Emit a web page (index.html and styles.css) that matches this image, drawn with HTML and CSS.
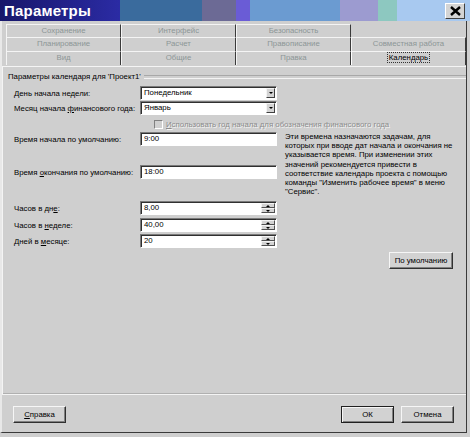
FILE: index.html
```html
<!DOCTYPE html>
<html lang="ru">
<head>
<meta charset="utf-8">
<title>Параметры</title>
<link rel="stylesheet" href="styles.css">
</head>
<body>
<div class="window">
  <div class="titlebar">
    <div class="band b1"><span class="title">Параметры</span></div>
    <div class="band b2"></div>
    <div class="band b3"></div>
    <div class="band b4"></div>
    <div class="band b5"></div>
    <div class="band b6"></div>
    <div class="band b7"></div>
    <div class="band b8">
      <div class="close">
        <svg width="11" height="10" viewBox="0 0 11 10"><path d="M1 1 L10 9 M10 1 L1 9" stroke="#000" stroke-width="2.4" fill="none"/></svg>
      </div>
    </div>
  </div>

  <div class="tabs">
    <div class="tabrow r1">
      <div class="tab">Сохранение</div>
      <div class="tab">Интерфейс</div>
      <div class="tab">Безопасность</div>
    </div>
    <div class="tabrow r2">
      <div class="tab">Планирование</div>
      <div class="tab">Расчет</div>
      <div class="tab">Правописание</div>
      <div class="tab">Совместная работа</div>
    </div>
    <div class="tabrow r3">
      <div class="tab">Вид</div>
      <div class="tab">Общие</div>
      <div class="tab">Правка</div>
      <div class="tab active"><span class="focus">Календарь</span></div>
    </div>
  </div>

  <div class="panel">
    <div class="legend"><span>Параметры календаря для 'Проект1'</span></div>

    <div class="row row-sel1">
      <label class="lbl">День начала недели:</label>
      <div class="field select"><span class="val">Понедельник</span><span class="ddbtn"><i></i></span></div>
    </div>
    <div class="row row-sel2">
      <label class="lbl">Месяц начала <u>ф</u>инансового года:</label>
      <div class="field select"><span class="val">Январь</span><span class="ddbtn"><i></i></span></div>
    </div>
    <div class="checkrow">
      <span class="check"></span>
      <span class="disabled"><u>И</u>спользовать год начала для обозначения финансового года</span>
    </div>

    <div class="timegroup">
      <div class="timecol">
        <div class="row">
          <label class="lbl">Время начала по умолчанию:</label>
          <div class="field"><span class="val">9:00</span></div>
        </div>
        <div class="row row-end">
          <label class="lbl">Время <u>о</u>кончания по умолчанию:</label>
          <div class="field"><span class="val">18:00</span></div>
        </div>
      </div>
      <p class="desc">Эти времена назначаются задачам, для которых при вводе дат начала и окончания не указывается время. При изменении этих значений рекомендуется привести в соответствие календарь проекта с помощью команды "Изменить рабочее время" в меню "Сервис".</p>
    </div>

    <div class="row row-spin1">
      <label class="lbl">Часов в дн<u>е</u>:</label>
      <div class="field spin"><span class="val">8,00</span><span class="spinbtns"><span class="sb up"><i></i></span><span class="sb down"><i></i></span></span></div>
    </div>
    <div class="row row-spin2">
      <label class="lbl">Часов в <u>н</u>еделе:</label>
      <div class="field spin"><span class="val">40,00</span><span class="spinbtns"><span class="sb up"><i></i></span><span class="sb down"><i></i></span></span></div>
    </div>
    <div class="row row-spin3">
      <label class="lbl">Дней в <u>м</u>есяце:</label>
      <div class="field spin"><span class="val">20</span><span class="spinbtns"><span class="sb up"><i></i></span><span class="sb down"><i></i></span></span></div>
    </div>

    <div class="defrow">
      <button class="btn btn-def">По умолчанию</button>
    </div>
  </div>

  <div class="footer">
    <button class="btn"><u>С</u>правка</button>
    <div class="spacer"></div>
    <button class="btn btn-ok">ОК</button>
    <button class="btn">Отмена</button>
  </div>
</div>
</body>
</html>
```

FILE: styles.css
```css
* { box-sizing: border-box; }
html, body { margin: 0; padding: 0; }
body {
  background: #cfcfcf;
  font-family: "Liberation Sans", Arial, sans-serif;
  font-size: 7.8px;
  color: #000;
  width: 470px;
  height: 437px;
  overflow: hidden;
}
.window {
  width: 467px;
  height: 433px;
  border-left: 2px solid #e8e8e8;
  border-right: 1px solid #3a3a3a;
  border-bottom: 1px solid #3a3a3a;
  display: flex;
  flex-direction: column;
  position: relative;
}
/* title bar */
.titlebar {
  height: 21px;
  display: flex;
  margin-left: -2px;
  width: 470px;
}
.band { height: 21px; }
.b1 { width: 120px; background: linear-gradient(90deg, #17176a, #2b2ba4); display: flex; align-items: center; }
.b2 { width: 82px; background: #3a6b9d; }
.b3 { width: 34px; background: #6c6a95; }
.b4 { width: 14px; background: #6a5cd6; }
.b5 { width: 90px; background: #6b9bd1; }
.b6 { width: 38px; background: #9c9bd0; }
.b7 { width: 19px; background: #8dc8c0; }
.b8 { flex: 1; background: #a8c9f0; position: relative; }
.title {
  color: #fff;
  font-weight: bold;
  font-size: 15px;
  margin-left: 4px;
  letter-spacing: 0.2px;
}
.close {
  position: absolute;
  left: 48px;
  top: 3px;
  width: 20px;
  height: 16px;
  background: #d4d4d4;
  border: 1px solid;
  border-color: #fff #404040 #404040 #fff;
  display: flex;
  align-items: center;
  justify-content: center;
}
/* tabs */
.tabs {
  margin-top: 3px;
  margin-left: 4px;
}
.tabrow { display: flex; }
.r1 { height: 13px; }
.r2, .r3 { height: 14px; }
.tab {
  width: 115px;
  border-top: 1px solid #f4f4f4;
  border-left: 1px solid #f4f4f4;
  border-right: 1px solid #3a3a3a;
  color: #8c9696;
  text-align: center;
  line-height: 12px;
  white-space: nowrap;
}
.tab.active {
  color: #000;
  border-left-color: #fff;
}
.focus {
  outline: 1px dotted #333;
  outline-offset: 0px;
  padding: 0 1px;
}
/* panel */
.panel {
  margin-top: 1px;
  height: 329px;
  margin-right: 0;
  border-top: 1px solid #f4f4f4;
  border-left: 1px solid #f4f4f4;
  border-bottom: 1px solid #f4f4f4;
  box-shadow: 0 -1px 0 0 #b0b0b0 inset;
  display: flex;
  flex-direction: column;
}
.legend {
  margin-top: 5px;
  margin-left: 5px;
  height: 10px;
  line-height: 10px;
  display: flex;
  align-items: center;
  white-space: nowrap;
}
.legend::after {
  content: "";
  flex: 1;
  height: 2px;
  margin-left: 3px;
  border-top: 1px solid #a8a8a8;
  border-bottom: 1px solid #f4f4f4;
}
.row {
  display: flex;
  align-items: center;
  height: 14px;
  padding-left: 11px;
}
.lbl { width: 126px; white-space: nowrap; }
.row-sel1 { margin-top: 4px; }
.row-sel2 { margin-top: 1px; }
.field {
  width: 137px;
  height: 14px;
  background: #fff;
  border: 1px solid;
  border-color: #7a7a7a #fff #fff #7a7a7a;
  box-shadow: inset 1px 1px 0 #303030;
  display: flex;
  align-items: center;
  position: relative;
}
.val { padding-left: 3px; line-height: 12px; }
.ddbtn {
  position: absolute;
  right: 1px;
  top: 1px;
  width: 9px;
  height: 10px;
  background: #d4d4d4;
  border: 1px solid;
  border-color: #f4f4f4 #404040 #404040 #f4f4f4;
  display: flex;
  align-items: center;
  justify-content: center;
}
.ddbtn i, .sb.down i {
  width: 0; height: 0;
  border-left: 2px solid transparent;
  border-right: 2px solid transparent;
  border-top: 2px solid #000;
}
.sb.up i {
  width: 0; height: 0;
  border-left: 2px solid transparent;
  border-right: 2px solid transparent;
  border-bottom: 2px solid #000;
}
.checkrow {
  margin-top: 4px;
  height: 10px;
  display: flex;
  align-items: center;
  padding-left: 151px;
  white-space: nowrap;
}
.check {
  width: 9px;
  height: 9px;
  background: #d0d0d0;
  border: 1px solid;
  border-color: #808080 #fff #fff #808080;
  margin-right: 3px;
}
.disabled {
  color: #8c8c8c;
  text-shadow: 1px 1px 0 #f4f4f4;
}
.timegroup {
  margin-top: 3px;
  height: 47px;
  display: flex;
  align-items: flex-start;
}
.row-end { margin-top: 19px; }
.desc {
  margin: 0 0 0 8px;
  width: 176px;
  line-height: 9.2px;
  font-size: 7.8px;
}
.row-spin1 { margin-top: 22px; }
.row-spin2 { margin-top: 3px; }
.row-spin3 { margin-top: 2px; }
.spinbtns {
  position: absolute;
  right: 1px;
  top: 1px;
  bottom: 1px;
  width: 14px;
  display: flex;
  flex-direction: column;
}
.sb {
  flex: 1;
  background: #d4d4d4;
  border: 1px solid;
  border-color: #f4f4f4 #505050 #505050 #f4f4f4;
  display: flex;
  align-items: center;
  justify-content: center;
}
.defrow {
  margin-top: 4px;
  display: flex;
  justify-content: flex-end;
  padding-right: 13px;
}
.btn {
  font-family: "Liberation Sans", Arial, sans-serif;
  font-size: 7.8px;
  color: #000;
  background: #d2d2d2;
  border: 1px solid;
  border-color: #f6f6f6 #303030 #303030 #f6f6f6;
  box-shadow: inset -1px -1px 0 #808080;
  height: 17px;
  width: 53px;
  padding: 0;
  margin: 0;
}
.btn-def { width: 64px; }
.btn-ok {
  border-color: #202020;
  box-shadow: inset 1px 1px 0 #f6f6f6, inset -1px -1px 0 #808080;
}
.footer {
  margin-top: 11px;
  display: flex;
  padding-left: 11px;
  padding-right: 12px;
  gap: 7px;
}
.spacer { flex: 1; }
```
